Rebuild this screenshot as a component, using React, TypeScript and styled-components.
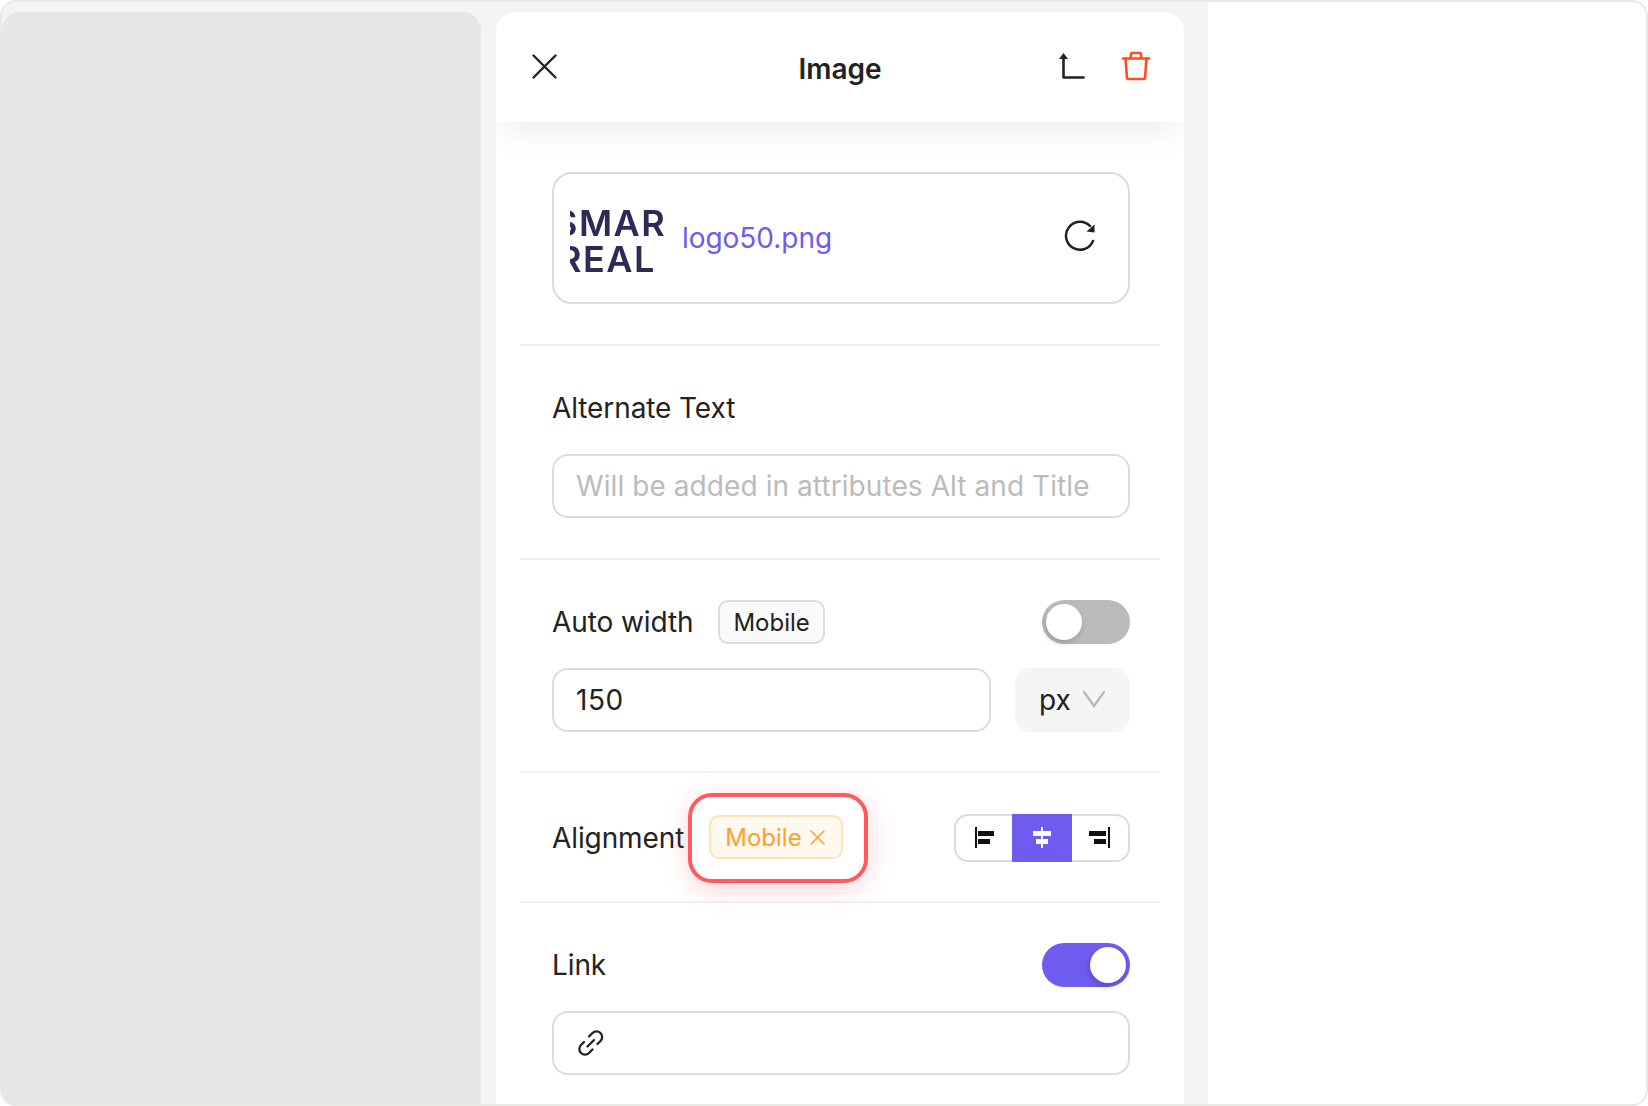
import React from "react";
import styled, { createGlobalStyle } from "styled-components";

const Global = createGlobalStyle`
  html, body { margin: 0; padding: 0; background: #fff; }
  body { font-family: Inter, "Liberation Sans", sans-serif; color: #222; overflow: hidden; }
  * { box-sizing: border-box; }
`;

const Frame = styled.div`
  width: 1648px;
  height: 1106px;
  display: flex;
  background: #f4f4f4;
  border: 2px solid #e8e8e4;
  border-radius: 16px;
  overflow: hidden;
`;
const Sidebar = styled.div`
  width: 478px;
  margin-top: 10px;
  background: #e6e6e6;
  border-radius: 18px 18px 0 0;
  box-shadow: 1px 0 1px #eaeaea;
`;
const Panel = styled.div`
  width: 688px;
  margin: 10px 0 0 16px;
  background: #fff;
  border-radius: 20px 20px 0 0;
  overflow: hidden;
`;
const Blank = styled.div`
  flex: 1;
  margin-left: 24px;
  background: #fff;
`;
const Header = styled.header`
  height: 110px;
  display: grid;
  grid-template-columns: 1fr auto 1fr;
  align-items: center;
  padding: 0 33px;
  background: #fff;
  box-shadow: 0 14px 34px -6px rgba(0, 0, 0, 0.08);
  position: relative;
`;
const Title = styled.h1`
  margin: 3px 0 0;
  font-size: 28px;
  font-weight: 600;
  line-height: 40px;
  color: #222;
`;
const HeaderActions = styled.div`
  display: flex;
  justify-content: flex-end;
  align-items: center;
  gap: 36px;
  margin-top: -2px;
`;
const IconSlot = styled.span`
  display: flex;
  margin: -2px 0 0 3px;
`;
const Section = styled.section<{ $top: number; $bottom: number }>`
  margin: 0 24px;
  padding: ${(p) => p.$top}px 30px ${(p) => p.$bottom}px 32px;
  border-bottom: 2px solid #f0f0f0;
`;
const UploadBox = styled.div`
  height: 132px;
  display: flex;
  align-items: center;
  padding: 0 30px 0 16px;
  border: 2px solid #dcdcdc;
  border-radius: 20px;
`;
const Logo = styled.div`
  width: 96px;
  height: 68px;
  margin-top: 1px;
  overflow: hidden;
  flex: none;
  font-family: Inter, sans-serif;
  font-weight: 600;
  font-size: 36px;
  line-height: 36px;
  letter-spacing: 1.5px;
  color: #2b2c56;
  white-space: nowrap;
  filter: blur(0.4px);
`;
const LogoLine = styled.div<{ $shift: number }>`
  margin-left: ${(p) => p.$shift}px;
`;
const FileName = styled.span`
  margin-left: 16px;
  font-size: 28px;
  letter-spacing: -0.04px;
  color: #6e5bf0;
  flex: 1;
`;
const Label = styled.span`
  font-size: 28px;
  line-height: 40px;
  letter-spacing: -0.1px;
  color: #222;
  white-space: nowrap;
`;
const StackLabel = styled(Label)`
  display: block;
  margin-bottom: 26px;
`;
const TextField = styled.input`
  display: block;
  width: 100%;
  height: 64px;
  padding: 0 22px;
  border: 2px solid #dcdcdc;
  border-radius: 16px;
  outline: none;
  background: #fff;
  font: 400 28px Inter, sans-serif;
  letter-spacing: 0.6px;
  color: #222;
  &::placeholder { color: #bbb; opacity: 1; letter-spacing: 0.08px; }
`;
const Row = styled.div<{ $mb?: number }>`
  display: flex;
  align-items: center;
  margin-bottom: ${(p) => p.$mb ?? 0}px;
`;
const Spacer = styled.div`
  flex: 1;
`;
const Badge = styled.span`
  margin-left: 25px;
  height: 44px;
  padding: 0 13px;
  display: inline-flex;
  align-items: center;
  background: #fafafa;
  border: 2px solid #dcdcdc;
  border-radius: 10px;
  font-size: 24px;
  color: #222;
`;
const Toggle = styled.div<{ $on: boolean }>`
  width: 88px;
  height: 44px;
  padding: 4px;
  display: flex;
  justify-content: ${(p) => (p.$on ? "flex-end" : "flex-start")};
  border-radius: 22px;
  background: ${(p) => (p.$on ? "#6e5bf0" : "#bbbbbb")};
`;
const Knob = styled.div`
  width: 36px;
  height: 36px;
  border-radius: 50%;
  background: #fff;
  box-shadow: -1px 3px 6px rgba(0, 0, 0, 0.18);
`;
const UnitSelect = styled.div`
  width: 115px;
  height: 64px;
  margin-left: 24px;
  padding: 0 24px 0 24px;
  flex: none;
  display: flex;
  align-items: center;
  justify-content: space-between;
  background: #f5f5f5;
  border-radius: 16px;
  font-size: 28px;
  color: #222;
`;
const Chevron = styled.svg`
  margin-top: -2px;
`;
const Highlight = styled.div`
  width: 180px;
  height: 90px;
  margin-left: 4px;
  padding: 18px 0 0 17px;
  border: 4px solid #ff5a5f;
  border-radius: 24px;
  background: #fff;
  box-shadow: 0 6px 24px rgba(255, 90, 95, 0.26);
  position: relative;
`;
const WarnBadge = styled.div`
  width: 134px;
  height: 44px;
  padding-left: 14px;
  display: flex;
  align-items: center;
  gap: 8px;
  background: #fff9ef;
  border: 2px solid #ffe3b4;
  border-radius: 10px;
  font-size: 24px;
  color: #ffa033;
`;
const Segments = styled.div`
  display: flex;
  height: 48px;
`;
const Segment = styled.div<{ $pos: "left" | "mid" | "right" }>`
  display: flex;
  align-items: center;
  justify-content: center;
  width: ${(p) => (p.$pos === "mid" ? 60 : 58)}px;
  background: ${(p) => (p.$pos === "mid" ? "#6e5bf0" : "#fff")};
  color: ${(p) => (p.$pos === "mid" ? "#fff" : "#111")};
  border: ${(p) => (p.$pos === "mid" ? "none" : "2px solid #dcdcdc")};
  border-left-width: ${(p) => (p.$pos === "right" ? 0 : undefined)};
  border-right-width: ${(p) => (p.$pos === "left" ? 0 : undefined)};
  border-radius: ${(p) =>
    p.$pos === "left" ? "14px 0 0 14px" : p.$pos === "right" ? "0 14px 14px 0" : "0"};
`;
const LinkField = styled.div`
  height: 64px;
  padding: 0 23px;
  display: flex;
  align-items: center;
  border: 2px solid #dcdcdc;
  border-radius: 16px;
  color: #222;
`;
const RefreshIcon = styled.svg`
  margin-top: -4px;
`;

const Bars = ({ line, top, bottom }: { line: number; top: [number, number]; bottom: [number, number] }) => (
  <svg width="24" height="24" viewBox="0 0 24 24" fill="currentColor">
    <rect x={line} y="1" width="2" height="21" />
    <rect x={top[0]} y="5" width={top[1]} height="5" />
    <rect x={bottom[0]} y="13" width={bottom[1]} height="5" />
  </svg>
);

export default function App() {
  return (
    <>
      <Global />
      <Frame>
        <Sidebar />
        <Panel>
          <Header>
            <IconSlot>
              <svg width="25" height="25" viewBox="0 0 25 25" fill="none" stroke="#222" strokeWidth="2.4" strokeLinecap="round">
                <path d="M1.500 1.500l22 22M23.500 1.500l-22 22" />
              </svg>
            </IconSlot>
            <Title>Image</Title>
            <HeaderActions>
              <svg width="26" height="28" viewBox="0 0 26 28" fill="none">
                <path d="M4.500 4.500V25.500H24.500" stroke="#222" strokeWidth="2.6" strokeLinecap="round" strokeLinejoin="round" />
                <path d="M4.500 1L9 7H0z" fill="#222" />
              </svg>
              <svg width="30" height="30" viewBox="0 0 30 30" fill="none" stroke="#ff4d1f" strokeWidth="2.6" strokeLinecap="round" strokeLinejoin="round">
                <path d="M2 7.500H28" />
                <path d="M4.500 7.500L6 27a1.500 1.500 0 0 0 1.500 1H22.500a1.500 1.500 0 0 0 1.500-1L25.500 7.500" />
                <path d="M9.500 7.500L10 3.500a1.500 1.500 0 0 1 1.500-1.500H18.500a1.500 1.500 0 0 1 1.500 1.500L20.500 7.500" />
              </svg>
            </HeaderActions>
          </Header>

          <Section $top={50} $bottom={40}>
            <UploadBox>
              <Logo>
                <LogoLine $shift={-16}>SMART</LogoLine>
                <LogoLine $shift={-12}>REAL</LogoLine>
              </Logo>
              <FileName>logo50.png</FileName>
              <RefreshIcon width="34" height="34" viewBox="0 0 34 34" fill="none">
                <path d="M29 22A14 14 0 1 1 26 7" stroke="#222" strokeWidth="2.500" strokeLinecap="round" />
                <path d="M30.500 5.500L30.500 13.500L22.500 12.500z" fill="#222" />
              </RefreshIcon>
            </UploadBox>
          </Section>

          <Section $top={42} $bottom={40}>
            <StackLabel>Alternate Text</StackLabel>
            <TextField readOnly placeholder="Will be added in attributes Alt and Title" />
          </Section>

          <Section $top={40} $bottom={39}>
            <Row $mb={24}>
              <Label>Auto width</Label>
              <Badge>Mobile</Badge>
              <Spacer />
              <Toggle $on={false}><Knob /></Toggle>
            </Row>
            <Row>
              <TextField readOnly defaultValue="150" />
              <UnitSelect>
                px
                <Chevron width="24" height="18" viewBox="0 0 24 18" fill="none" stroke="#b8b8b8" strokeWidth="2.200" strokeLinecap="round">
                  <path d="M2 2l10 14L22 2" />
                </Chevron>
              </UnitSelect>
            </Row>
          </Section>

          <Section $top={20} $bottom={18}>
            <Row>
              <Label>Alignment</Label>
              <Highlight>
                <WarnBadge>
                  Mobile
                  <svg width="15" height="15" viewBox="0 0 15 15" fill="none" stroke="#ffa033" strokeWidth="1.600" strokeLinecap="round">
                    <path d="M1 1l13 13M14 1L1 14" />
                  </svg>
                </WarnBadge>
              </Highlight>
              <Spacer />
              <Segments>
                <Segment $pos="left"><Bars line={3} top={[6, 16]} bottom={[6, 12]} /></Segment>
                <Segment $pos="mid"><Bars line={11} top={[3, 18]} bottom={[6, 12]} /></Segment>
                <Segment $pos="right"><Bars line={20} top={[1, 17]} bottom={[6, 12]} /></Segment>
              </Segments>
            </Row>
          </Section>

          <Section $top={40} $bottom={40}>
            <Row $mb={24}>
              <Label>Link</Label>
              <Spacer />
              <Toggle $on={true}><Knob /></Toggle>
            </Row>
            <LinkField>
              <svg width="28" height="28" viewBox="0 0 28 28" fill="none" stroke="#222" strokeWidth="2.300" strokeLinecap="round" strokeLinejoin="round">
                <path d="M12 7.500L15.500 4a5.500 5.500 0 0 1 8 8L20.500 15" />
                <path d="M15.500 20.500L12 24a5.500 5.500 0 0 1-8-8L7 13" />
                <path d="M10.500 17.500L17 11" />
              </svg>
            </LinkField>
          </Section>
        </Panel>
        <Blank />
      </Frame>
    </>
  );
}
